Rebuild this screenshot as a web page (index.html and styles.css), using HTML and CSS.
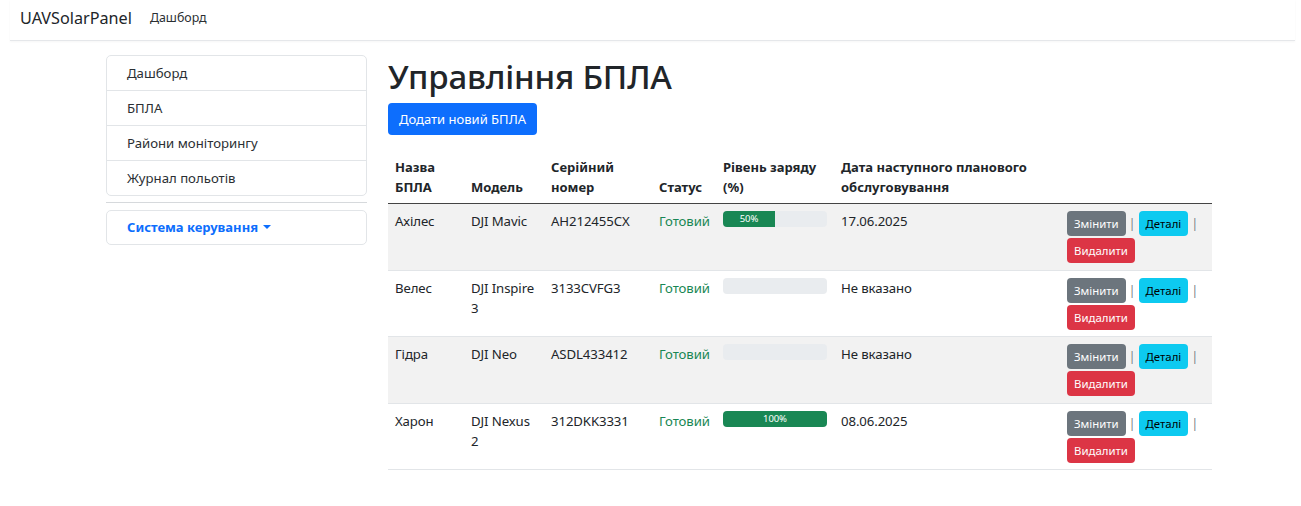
FILE: index.html
```html
<!DOCTYPE html>
<html lang="uk">
<head>
<meta charset="utf-8">
<title>UAVSolarPanel — Управління БПЛА</title>
<link rel="stylesheet" href="styles.css">
</head>
<body>
<header class="navbar">
  <a class="brand" href="#">UAVSolarPanel</a>
  <a class="nav-link" href="#">Дашборд</a>
</header>

<div class="container">
  <aside class="sidebar">
    <ul class="list-group">
      <li class="list-item">Дашборд</li>
      <li class="list-item">БПЛА</li>
      <li class="list-item">Райони моніторингу</li>
      <li class="list-item">Журнал польотів</li>
    </ul>
    <hr class="divider">
    <div class="menu-card">
      <span class="dropdown-toggle">Система керування</span>
    </div>
  </aside>

  <main class="content">
    <h1 class="title">Управління БПЛА</h1>
    <button class="btn btn-primary">Додати новий БПЛА</button>

    <table class="table">
      <colgroup>
        <col class="c-name"><col class="c-model"><col class="c-serial"><col class="c-status"><col class="c-charge"><col class="c-date"><col class="c-actions">
      </colgroup>
      <thead>
        <tr>
          <th>Назва БПЛА</th>
          <th>Модель</th>
          <th>Серійний номер</th>
          <th>Статус</th>
          <th>Рівень заряду (%)</th>
          <th>Дата наступного планового обслуговування</th>
          <th></th>
        </tr>
      </thead>
      <tbody>
        <tr class="striped">
          <td>Ахілес</td>
          <td>DJI Mavic</td>
          <td>AH212455CX</td>
          <td class="ok">Готовий</td>
          <td><div class="progress"><div class="bar" style="width:50%">50%</div></div></td>
          <td>17.06.2025</td>
          <td class="actions"><button class="btn btn-sm btn-secondary">Змінити</button> | <button class="btn btn-sm btn-info">Деталі</button> | <button class="btn btn-sm btn-danger">Видалити</button></td>
        </tr>
        <tr>
          <td>Велес</td>
          <td>DJI Inspire 3</td>
          <td>3133CVFG3</td>
          <td class="ok">Готовий</td>
          <td><div class="progress"></div></td>
          <td>Не вказано</td>
          <td class="actions"><button class="btn btn-sm btn-secondary">Змінити</button> | <button class="btn btn-sm btn-info">Деталі</button> | <button class="btn btn-sm btn-danger">Видалити</button></td>
        </tr>
        <tr class="striped">
          <td>Гідра</td>
          <td>DJI Neo</td>
          <td>ASDL433412</td>
          <td class="ok">Готовий</td>
          <td><div class="progress"></div></td>
          <td>Не вказано</td>
          <td class="actions"><button class="btn btn-sm btn-secondary">Змінити</button> | <button class="btn btn-sm btn-info">Деталі</button> | <button class="btn btn-sm btn-danger">Видалити</button></td>
        </tr>
        <tr>
          <td>Харон</td>
          <td>DJI Nexus 2</td>
          <td>312DKK3331</td>
          <td class="ok">Готовий</td>
          <td><div class="progress"><div class="bar" style="width:100%">100%</div></div></td>
          <td>08.06.2025</td>
          <td class="actions"><button class="btn btn-sm btn-secondary">Змінити</button> | <button class="btn btn-sm btn-info">Деталі</button> | <button class="btn btn-sm btn-danger">Видалити</button></td>
        </tr>
      </tbody>
    </table>
  </main>
</div>
</body>
</html>
```

FILE: styles.css
```css
* { box-sizing: border-box; }

body {
  margin: 0;
  font-family: "Noto Sans", "Open Sans", sans-serif;
  font-size: 13.2px;
  line-height: 20px;
  color: #212529;
  background: #fff;
}

a { text-decoration: none; }

/* top navigation */
.navbar {
  display: flex;
  align-items: center;
  height: 41px;
  margin: 0 6px 0 10px;
  padding-left: 10px;
  border-bottom: 1px solid #e5e7ea;
  box-shadow: 0 1px 2px rgba(0,0,0,0.04);
}
.brand {
  font-size: 16.2px;
  color: #212529;
  margin-right: 18px;
  padding-bottom: 4px;
}
.nav-link {
  font-size: 12.4px;
  color: #2b2f33;
  padding-bottom: 4px;
}

/* page layout */
.container {
  display: flex;
  gap: 21px;
  padding-left: 106px;
  padding-top: 14px;
}

.sidebar {
  width: 261px;
  flex: none;
}

.list-group {
  list-style: none;
  margin: 0;
  padding: 0;
  border: 1px solid #e2e5e8;
  border-radius: 5px;
}
.list-item {
  height: 35px;
  display: flex;
  align-items: center;
  padding: 0 20px;
  border-top: 1px solid #e2e5e8;
  color: #2b2f33;
}
.list-item:first-child { border-top: 0; height: 34px; }

.divider {
  border: 0;
  border-top: 1px solid #d6d9dc;
  margin: 6px 0 7px;
}

.menu-card {
  height: 35px;
  border: 1px solid #e2e5e8;
  border-radius: 5px;
  display: flex;
  align-items: center;
  padding: 0 20px;
}
.dropdown-toggle {
  color: #0d6efd;
  font-weight: 700;
  font-size: 13px;
  padding-bottom: 2px;
}
.dropdown-toggle::after {
  content: "";
  display: inline-block;
  margin-left: 5px;
  vertical-align: 3px;
  border-top: 4px solid #0d6efd;
  border-left: 4px solid transparent;
  border-right: 4px solid transparent;
}

.content {
  width: 824px;
  flex: none;
}

.title {
  font-size: 33px;
  font-weight: 500;
  line-height: 42px;
  margin: 1px 0 5px;
  letter-spacing: -0.2px;
}

/* buttons */
.btn {
  font-family: inherit;
  border: 1px solid transparent;
  border-radius: 4px;
  cursor: pointer;
  color: #fff;
}
.btn-primary {
  background: #0d6efd;
  font-size: 13px;
  height: 32px;
  padding: 0 10px;
  margin-bottom: 17px;
}
.btn-sm {
  font-size: 11.4px;
  line-height: 17px;
  padding: 3px 6px;
  margin: 1px 0;
}
.btn-secondary { background: #6c757d; }
.btn-info { background: #0dcaf0; color: #000; }
.btn-danger { background: #dc3545; }

/* table */
.table {
  width: 100%;
  border-collapse: collapse;
  table-layout: fixed;
}
.c-name { width: 76px; }
.c-model { width: 80px; }
.c-serial { width: 108px; }
.c-status { width: 64px; }
.c-charge { width: 118px; }
.c-date { width: 226px; }
.c-actions { width: 152px; }

.table th {
  text-align: left;
  vertical-align: bottom;
  font-weight: 700;
  font-size: 13px;
  padding: 5px 7px 6px;
  border-bottom: 1.5px solid #444;
}
.table td {
  vertical-align: top;
  padding: 7px 7px 5px;
  border-bottom: 1px solid #e2e5e8;
  letter-spacing: -0.1px;
}
.table td.actions { padding-top: 6px; padding-bottom: 5.5px; color: #777d83; font-size: 12px; letter-spacing: 0; }
.striped td { background: #f2f2f2; }

.ok { color: #198754; }

.progress {
  height: 16px;
  background: #e9ecef;
  border-radius: 4px;
  overflow: hidden;
  display: flex;
}
.bar {
  background: #198754;
  color: #fff;
  font-size: 9.5px;
  line-height: 16px;
  text-align: center;
}
```
